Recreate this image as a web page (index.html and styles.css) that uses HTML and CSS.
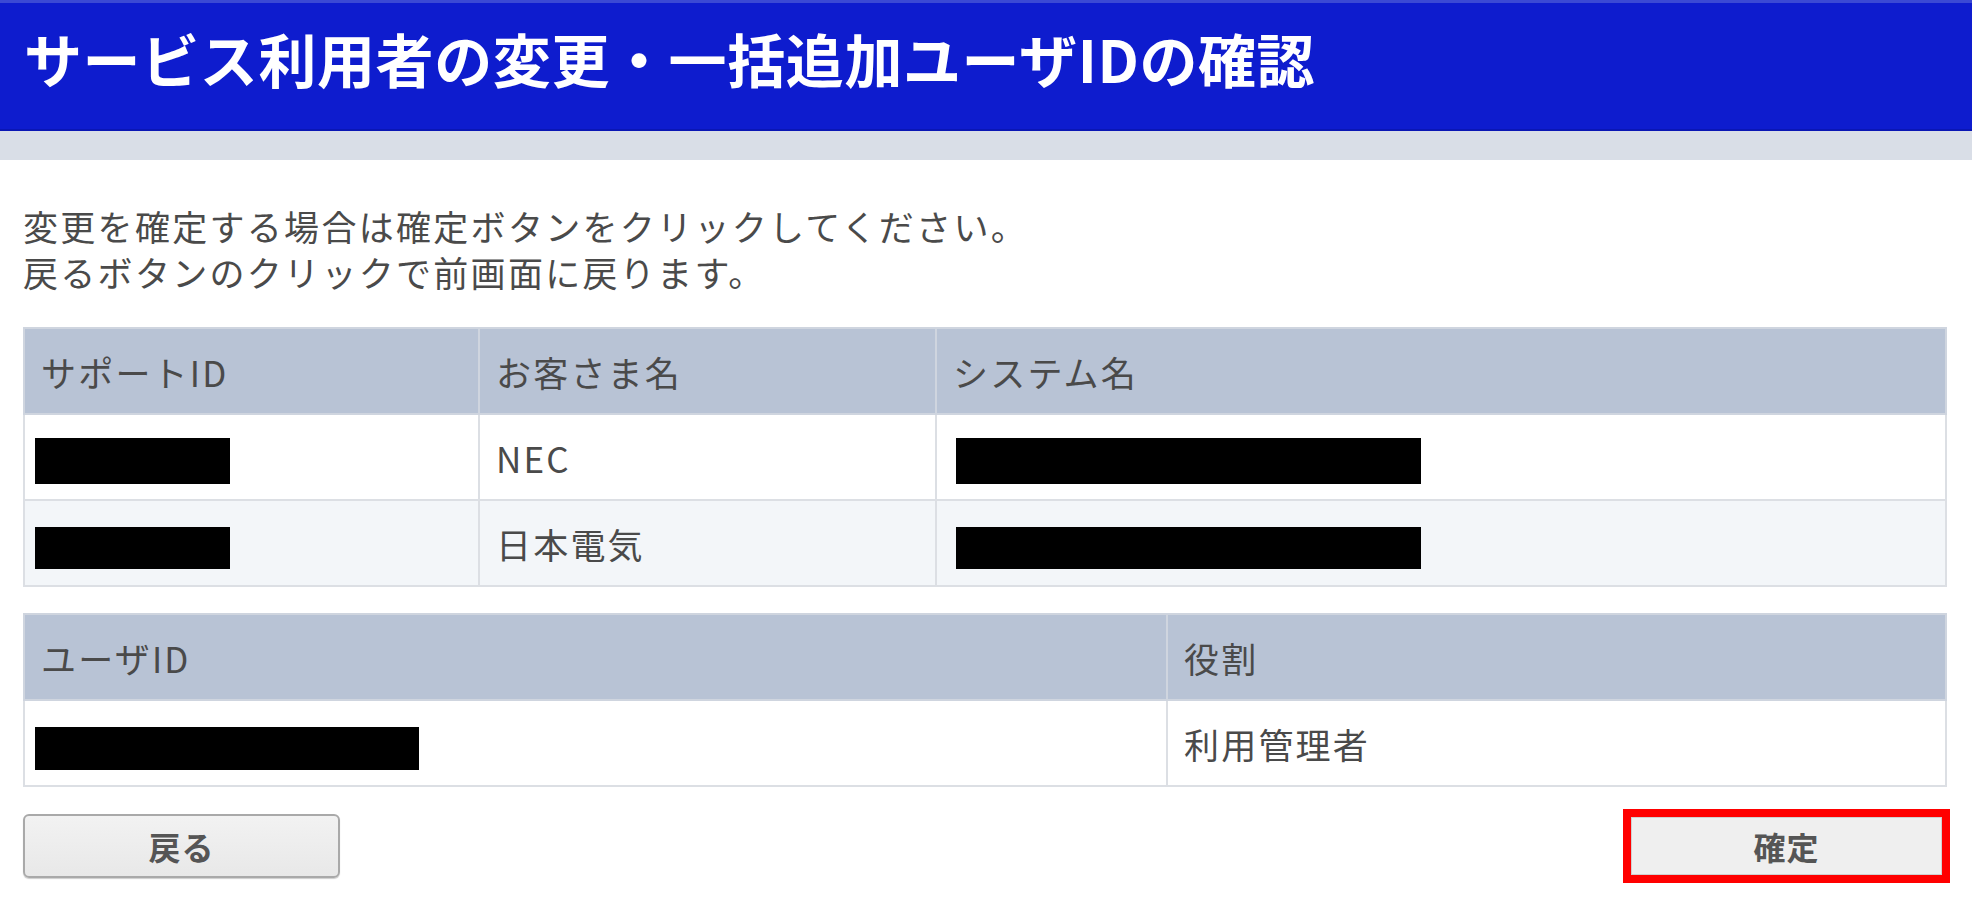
FILE: index.html
```html
<!DOCTYPE html>
<html lang="ja">
<head>
<meta charset="utf-8">
<title>サービス利用者の変更・一括追加ユーザIDの確認</title>
<link rel="stylesheet" href="styles.css">
</head>
<body>
<header class="page-header">
  <h1 class="page-title">サービス利用者の変更・一括追加ユーザIDの確認</h1>
</header>
<div class="sub-band"></div>
<main class="content">
  <p class="lead">変更を確定する場合は確定ボタンをクリックしてください。<br>戻るボタンのクリックで前画面に戻ります。</p>

  <table class="grid grid-customer">
    <colgroup>
      <col class="c-support">
      <col class="c-customer">
      <col>
    </colgroup>
    <thead>
      <tr><th>サポートID</th><th>お客さま名</th><th>システム名</th></tr>
    </thead>
    <tbody>
      <tr>
        <td><span class="redact redact-id"></span></td>
        <td>NEC</td>
        <td class="sys"><span class="redact redact-sys"></span></td>
      </tr>
      <tr class="alt">
        <td><span class="redact redact-id redact-sm"></span></td>
        <td>日本電気</td>
        <td class="sys"><span class="redact redact-sys redact-sm"></span></td>
      </tr>
    </tbody>
  </table>

  <table class="grid grid-user">
    <colgroup>
      <col class="c-user">
      <col>
    </colgroup>
    <thead>
      <tr><th>ユーザID</th><th>役割</th></tr>
    </thead>
    <tbody>
      <tr>
        <td><span class="redact redact-user"></span></td>
        <td>利用管理者</td>
      </tr>
    </tbody>
  </table>

  <div class="actions">
    <button class="btn btn-back" type="button">戻る</button>
    <div class="highlight">
      <button class="btn btn-confirm" type="button">確定</button>
    </div>
  </div>
</main>
</body>
</html>
```

FILE: styles.css
```css
html, body {
  margin: 0;
  padding: 0;
  background: #ffffff;
}

body {
  font-family: "Noto Sans CJK JP", "Noto Sans", sans-serif;
  color: #4a4a4a;
}

.page-header {
  height: 131px;
  box-sizing: border-box;
  background: #0e1cce;
  border-top: 3px solid #3b49d4;
  border-bottom: 2px solid #0a16b4;
  display: flex;
  align-items: center;
  padding-left: 24px;
  padding-bottom: 16px;
}

.page-title {
  margin: 0;
  color: #ffffff;
  font-size: 58px;
  font-weight: 700;
  line-height: 1;
  letter-spacing: 0.6px;
}

.sub-band {
  height: 29px;
  background: #d9dee7;
}

.content {
  padding: 0 25px 0 23px;
}

.lead {
  margin: 43px 0 0;
  font-size: 35px;
  line-height: 46px;
  letter-spacing: 2.3px;
}

.grid {
  width: 100%;
  border-collapse: collapse;
  table-layout: fixed;
  font-size: 35px;
  letter-spacing: 2.2px;
}

.grid-customer {
  margin-top: 32px;
}

.grid-user {
  margin-top: 26px;
}

.c-support { width: 455px; }
.c-customer { width: 457px; }
.c-user { width: 1143px; }

.grid th,
.grid td {
  border: 2px solid #dcdfe4;
  text-align: left;
  vertical-align: middle;
  padding: 0 16px;
  font-weight: 400;
}

.grid th {
  background: #b8c3d5;
  border-color: #cfd5df;
  height: 84px;
  color: #4a4a4a;
}

.grid td {
  height: 84px;
  background: #ffffff;
}

.grid tr.alt td {
  background: #f3f6f9;
}

.grid td:first-child {
  padding-left: 10px;
}

.grid td.sys {
  padding-left: 19px;
}

.redact {
  display: inline-block;
  vertical-align: middle;
  background: #000000;
  height: 46px;
}

.redact-sm {
  height: 42px;
}

.redact-id { width: 195px; }
.redact-sys { width: 465px; }
.redact-user { width: 384px; height: 43px; }

.actions {
  margin-top: 22px;
  display: flex;
  justify-content: space-between;
  align-items: center;
}

.btn {
  font-family: "Noto Sans CJK JP", "Noto Sans", sans-serif;
  font-size: 32px;
  font-weight: 700;
  color: #555555;
  letter-spacing: 1px;
  cursor: pointer;
}

.btn-back {
  width: 317px;
  height: 64px;
  background: linear-gradient(#f2f2f2, #e8e8e8);
  border: 2px solid #a9a9a9;
  border-radius: 6px;
  box-shadow: 0 1px 1px rgba(0, 0, 0, 0.2);
}

.highlight {
  border: 8px solid #ff0000;
  margin-right: -3px;
}

.btn-confirm {
  display: block;
  width: 311px;
  height: 58px;
  background: #efefef;
  border: 1px solid #d0d0d0;
  padding: 0;
}
```
